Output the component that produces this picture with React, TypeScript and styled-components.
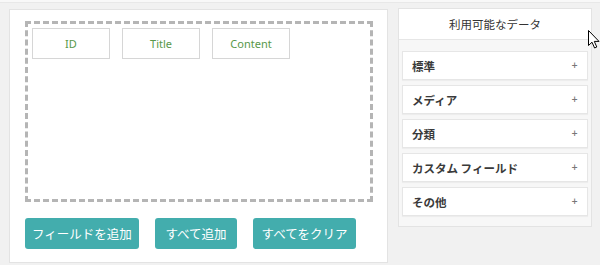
import * as React from "react";
import styled, { createGlobalStyle } from "styled-components";

const GlobalStyle = createGlobalStyle`
  html, body {
    margin: 0;
    padding: 0;
    background: #f1f1f1;
    font-family: "Noto Sans", "Noto Sans CJK JP", sans-serif;
    color: #333;
  }
`;

const fields = ["ID", "Title", "Content"];
const actions = [
  { label: "フィールドを追加", width: 114 },
  { label: "すべて追加", width: 82 },
  { label: "すべてをクリア", width: 103 },
];
const groups = ["標準", "メディア", "分類", "カスタム フィールド", "その他"];

const Screen = styled.div`
  position: relative;
  width: 600px;
  height: 265px;
  overflow: hidden;
`;

const TopStrip = styled.div`
  height: 2px;
  background: #f8f8f8;
  border-bottom: 1px solid #e8e8e8;
`;

const Layout = styled.div`
  display: flex;
  align-items: flex-start;
  gap: 10px;
  padding: 6px 0 0 9px;
`;

const Editor = styled.section`
  box-sizing: border-box;
  width: 379px;
  height: 254px;
  background: #fff;
  border: 1px solid #e3e3e3;
  padding: 11px 15px 0 15px;
`;

const DropZone = styled.div`
  box-sizing: border-box;
  width: 348px;
  height: 181px;
  border: 3px dashed #b5b5b5;
  padding: 4px;
  display: flex;
  align-items: flex-start;
  gap: 12px;
`;

const FieldChip = styled.div`
  box-sizing: border-box;
  width: 78px;
  height: 31px;
  border: 1px solid #d6d6d6;
  display: flex;
  align-items: center;
  justify-content: center;
  font-size: 11px;
  color: #58984a;
`;

const ButtonRow = styled.div`
  display: flex;
  gap: 16px;
  margin-top: 16px;
`;

const ActionButton = styled.button<{ $width: number }>`
  box-sizing: border-box;
  width: ${p => p.$width}px;
  height: 31px;
  border: none;
  border-radius: 3px;
  background: #43adad;
  color: #fff;
  font-family: "Noto Sans CJK JP", sans-serif;
  font-size: 12.5px;
  padding: 0;
  cursor: pointer;
`;

const DataPanel = styled.aside`
  box-sizing: border-box;
  width: 194px;
  margin-top: -1px;
  background: #f7f7f7;
  border: 1px solid #e3e3e3;
`;

const PanelHeader = styled.div`
  height: 30px;
  background: #fff;
  border-bottom: 1px solid #e6e6e6;
  display: flex;
  align-items: center;
  justify-content: center;
  font-family: "Noto Sans CJK JP", sans-serif;
  font-size: 11.5px;
  color: #333;
`;

const GroupList = styled.div`
  display: flex;
  flex-direction: column;
  gap: 5px;
  padding: 11px 3px 10px 3px;
`;

const GroupItem = styled.div`
  box-sizing: border-box;
  height: 29px;
  background: #fff;
  border: 1px solid #e6e6e6;
  box-shadow: 0 1px 1px rgba(0, 0, 0, 0.04);
  display: flex;
  align-items: center;
  justify-content: space-between;
  padding: 0 9px 0 9px;
  font-family: "Noto Sans CJK JP", sans-serif;
  font-size: 11.5px;
  font-weight: 700;
  color: #3a3a3a;
`;

const Plus = styled.span`
  font-family: "DejaVu Sans", sans-serif;
  font-size: 8px;
  font-weight: 700;
  color: #777;
`;

const Pointer = styled.svg`
  position: absolute;
  left: 588px;
  top: 30px;
`;

export default function App() {
  return (
    <Screen>
      <GlobalStyle />
      <TopStrip />
      <Layout>
        <Editor>
          <DropZone>
            {fields.map(f => (
              <FieldChip key={f}>{f}</FieldChip>
            ))}
          </DropZone>
          <ButtonRow>
            {actions.map(a => (
              <ActionButton key={a.label} $width={a.width}>
                {a.label}
              </ActionButton>
            ))}
          </ButtonRow>
        </Editor>
        <DataPanel>
          <PanelHeader>利用可能なデータ</PanelHeader>
          <GroupList>
            {groups.map(g => (
              <GroupItem key={g}>
                {g}
                <Plus>+</Plus>
              </GroupItem>
            ))}
          </GroupList>
        </DataPanel>
      </Layout>
      <Pointer width="12" height="19" viewBox="0 0 12 19">
        <path d="M0.5 0.5 L0.5 15.5 L4 12.2 L6.6 18 L8.8 17 L6.3 11.4 L11 11.4 Z" fill="#fff" stroke="#000" strokeWidth="1" strokeLinejoin="round" />
      </Pointer>
    </Screen>
  );
}
